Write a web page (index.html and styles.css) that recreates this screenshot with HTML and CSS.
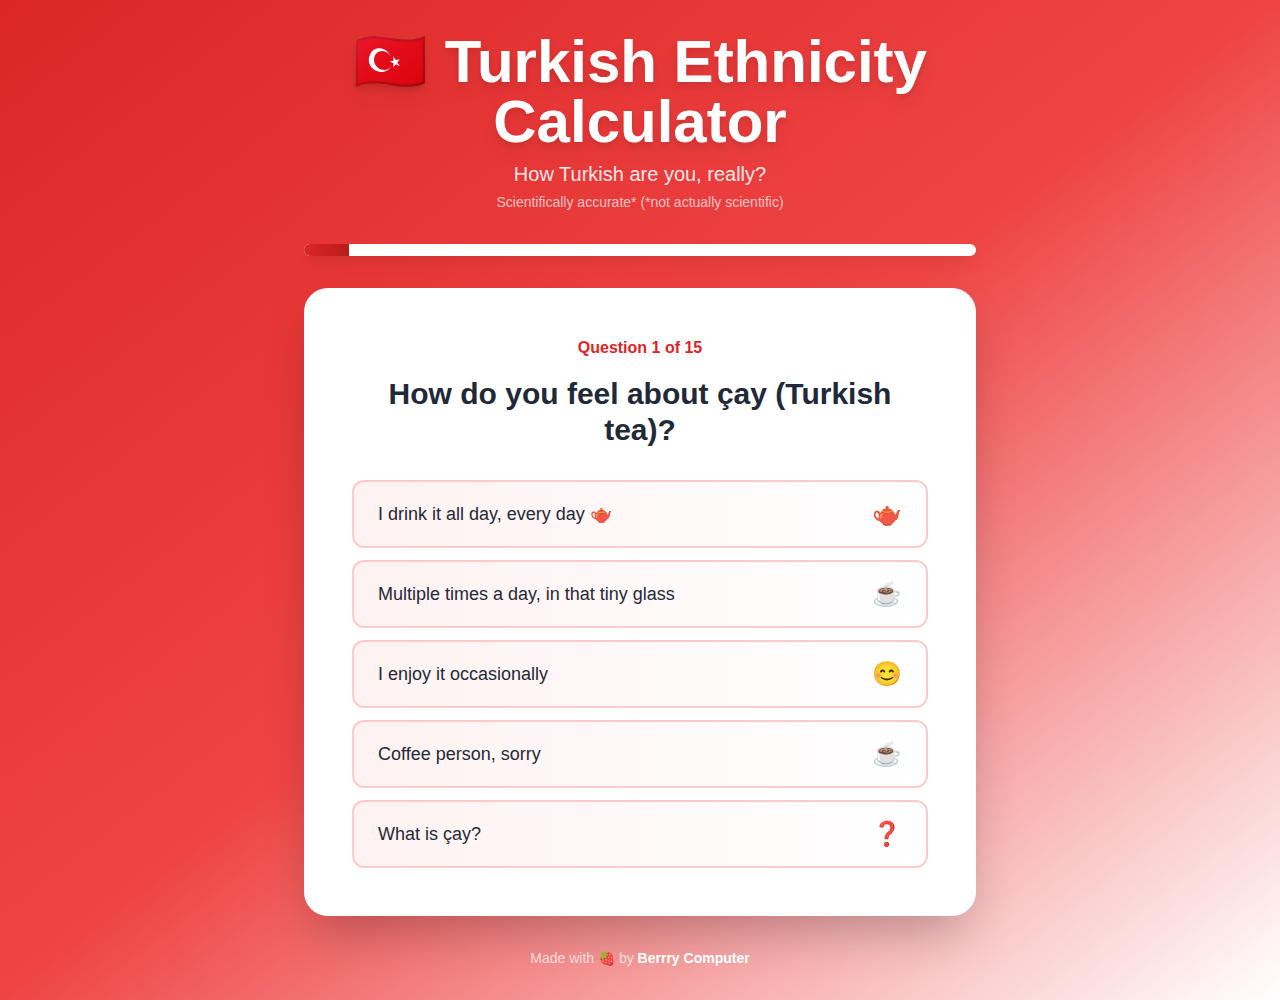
FILE: index.html
```html
<!DOCTYPE html>
<html lang="en">
<head>
<meta charset="UTF-8">
<meta name="viewport" content="width=device-width, initial-scale=1">
<title>Turkish Ethnicity Calculator</title>
<link rel="stylesheet" href="styles.css">
</head>
<body>
<div class="page">
  <header class="header">
    <h1 class="title">🇹🇷 Turkish Ethnicity Calculator</h1>
    <p class="subtitle">How Turkish are you, really?</p>
    <p class="note">Scientifically accurate* (*not actually scientific)</p>
  </header>
  <div class="progress" role="progressbar" aria-label="Quiz progress" aria-valuemin="0" aria-valuemax="15" aria-valuenow="1">
    <div class="progress-fill" style="width: 6.67%"></div>
  </div>
  <main class="card">
    <p class="counter">Question 1 of 15</p>
    <h2 class="question">How do you feel about çay (Turkish tea)?</h2>
    <div class="options">
      <button class="option" type="button"><span>I drink it all day, every day 🫖</span><span class="emoji">🫖</span></button>
      <button class="option" type="button"><span>Multiple times a day, in that tiny glass</span><span class="emoji">☕</span></button>
      <button class="option" type="button"><span>I enjoy it occasionally</span><span class="emoji">😊</span></button>
      <button class="option" type="button"><span>Coffee person, sorry</span><span class="emoji">☕</span></button>
      <button class="option" type="button"><span>What is çay?</span><span class="emoji">❓</span></button>
    </div>
  </main>
  <footer class="footer">Made with 🍓 by <a class="brand" href="#">Berrry Computer</a></footer>
</div>
</body>
</html>
```
FILE: styles.css
```css
* { box-sizing: border-box; margin: 0; padding: 0; }

body {
  min-height: 100vh;
  font-family: "Liberation Sans", Arial, sans-serif;
  line-height: 24px;
  color: #1f2937;
  background: linear-gradient(to bottom right, #dc2626 0%, #ef4444 50%, #ffffff 100%);
}

.page { max-width: 672px; margin: 0 auto; padding: 32px 0; }

.header { text-align: center; margin-bottom: 32px; }

.title {
  margin-bottom: 8px;
  font-size: 60px;
  line-height: 60px;
  font-weight: 700;
  color: #fff;
  filter: drop-shadow(0 10px 8px rgba(0, 0, 0, 0.04)) drop-shadow(0 4px 3px rgba(0, 0, 0, 0.1));
}

.subtitle { font-size: 20px; line-height: 28px; color: rgba(255, 255, 255, 0.9); }
.note { margin-top: 4px; font-size: 14px; line-height: 20px; color: rgba(255, 255, 255, 0.7); }

.progress {
  height: 12px;
  margin-bottom: 32px;
  overflow: hidden;
  border-radius: 9999px;
  background: #fff;
  box-shadow: 0 10px 15px -3px rgba(0, 0, 0, 0.1), 0 4px 6px -4px rgba(0, 0, 0, 0.1);
}

.progress-fill { height: 100%; background: linear-gradient(to right, #dc2626, #b91c1c); }

.card {
  padding: 48px;
  border-radius: 24px;
  background: #fff;
  box-shadow: 0 25px 50px -12px rgba(0, 0, 0, 0.25);
}

.counter { margin-bottom: 16px; text-align: center; font-weight: 700; color: #dc2626; }
.question { margin-bottom: 32px; text-align: center; font-size: 30px; line-height: 36px; font-weight: 700; }

.options { display: grid; gap: 12px; }

.option {
  display: flex;
  align-items: center;
  justify-content: space-between;
  padding: 16px 24px;
  border: 2px solid #fecaca;
  border-radius: 12px;
  background: linear-gradient(to right, #fef2f2, #ffffff);
  font-family: inherit;
  font-size: 18px;
  line-height: 28px;
  color: #1f2937;
  text-align: left;
  cursor: pointer;
}

.option:hover { border-color: #f87171; }
.emoji { font-size: 24px; line-height: 32px; }

.footer { margin-top: 32px; text-align: center; font-size: 14px; line-height: 20px; color: rgba(255, 255, 255, 0.7); }
.brand { font-weight: 700; color: #fff; text-decoration: none; }
```
